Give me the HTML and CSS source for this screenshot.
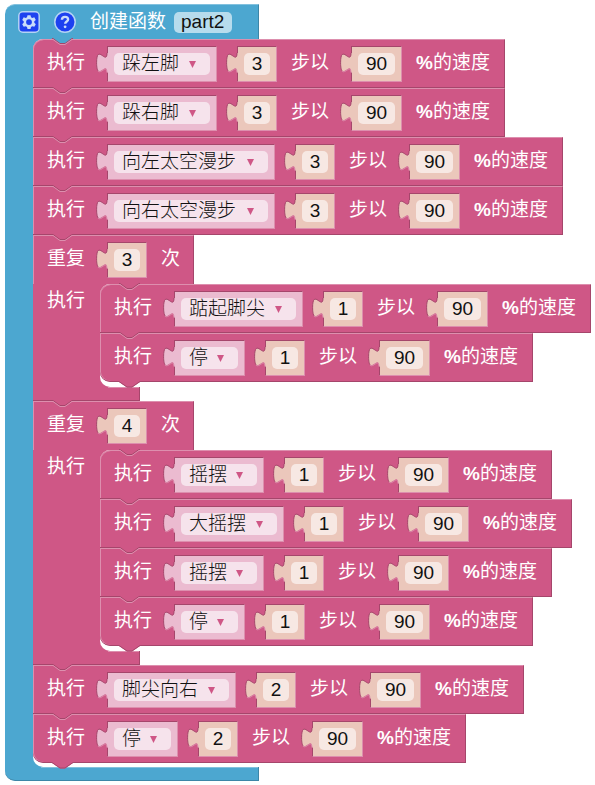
FILE: index.html
```html
<!DOCTYPE html>
<html lang="zh-CN">
<head>
<meta charset="utf-8">
<meta name="viewport" content="width=device-width, initial-scale=1">
<title>part2</title>
<link rel="stylesheet" href="styles.css">
</head>
<body>
<svg class="defs" aria-hidden="true">
  <symbol id="notch" viewBox="0 0 21 8">
    <path class="notch-fill" d="M0 0H21L20 1L14 6H8L1 1z"/>
    <path class="notch-dark" d="M0 .5H1L8 5.5H13L20 .5H21"/>
    <path class="notch-light" d="M0 1.5H1L8 6.5H13L20 1.5H21"/>
  </symbol>
  <symbol id="tail" viewBox="0 0 21 8">
    <path class="tail-fill" d="M0 0H21V1L13 6.5H8L0 1z"/>
    <path class="notch-dark" d="M0 .5L8 6H13L21 .5"/>
  </symbol>
  <symbol id="plug" viewBox="0 0 12 22">
    <path class="plug-fill" d="M12 1H11C11 14 .6 -9.4 .6 10.75C.6 30.9 11 7.5 11 20.5H12z"/>
    <path class="plug-dark" d="M11 1C11 14 .6 -9.4 .6 10.75C.6 15.500 1.300 18 2.200 19"/>
    <path class="plug-light" d="M2.200 19.300C5.500 22 10.500 12 11 20.500"/>
  </symbol>
</svg>
<main class="workspace">
  <section class="fn">
    <header class="fn-head">
      <button class="icon" aria-label="设置">
        <svg viewBox="0 0 22 22"><rect class="icon-bg" x=".8" y=".8" width="20.400" height="20.400" rx="4"/><path class="gear" fill-rule="evenodd" d="M9.500 4.200h3l.5 2 1.300.7 2-.6 1.500 2.600-1.500 1.400v1.500l1.500 1.400-1.500 2.600-2-.6-1.300.7-.5 2h-3l-.5-2-1.300-.7-2 .6-1.500-2.600 1.500-1.400v-1.500L4.200 8.900l1.500-2.600 2 .6L9 6.200zM11 8.200a2.900 2.900 0 1 0 0 5.800a2.900 2.900 0 0 0 0-5.800z"/></svg>
      </button>
      <button class="icon" aria-label="帮助">
        <svg viewBox="0 0 22 22"><circle class="icon-bg" cx="11" cy="11" r="10.200"/><path class="mark" d="M7.900 8.700C8 6.800 9.300 5.900 11 5.900s3.100 1 3.100 2.600c0 2-2.900 2.100-2.900 4.300"/><circle class="dot" cx="11.100" cy="15.800" r="1.400"/></svg>
      </button>
      <label for="fn-name">创建函数</label>
      <input id="fn-name" class="name" value="part2">
    </header>
    <div class="fn-body">
      <div class="stack">
        <div class="row first"><svg class="notch"><use href="#notch"/></svg>
          <label class="verb" for="a1">执行</label>
          <span class="slot action c3"><svg class="plug"><use href="#plug"/></svg><select id="a1"><option>跺左脚</option></select></span>
          <span class="slot num"><svg class="plug"><use href="#plug"/></svg><input id="s1" value="3"></span>
          <label class="steps" for="s1">步以</label>
          <span class="slot num wide"><svg class="plug"><use href="#plug"/></svg><input id="p1" value="90"></span>
          <label class="speed" for="p1"><b>%</b>的速度</label>
        </div>
        <div class="row"><svg class="notch"><use href="#notch"/></svg>
          <label class="verb" for="a2">执行</label>
          <span class="slot action c3"><svg class="plug"><use href="#plug"/></svg><select id="a2"><option>跺右脚</option></select></span>
          <span class="slot num"><svg class="plug"><use href="#plug"/></svg><input id="s2" value="3"></span>
          <label class="steps" for="s2">步以</label>
          <span class="slot num wide"><svg class="plug"><use href="#plug"/></svg><input id="p2" value="90"></span>
          <label class="speed" for="p2"><b>%</b>的速度</label>
        </div>
        <div class="row"><svg class="notch"><use href="#notch"/></svg>
          <label class="verb" for="a3">执行</label>
          <span class="slot action c6"><svg class="plug"><use href="#plug"/></svg><select id="a3"><option>向左太空漫步</option></select></span>
          <span class="slot num"><svg class="plug"><use href="#plug"/></svg><input id="s3" value="3"></span>
          <label class="steps" for="s3">步以</label>
          <span class="slot num wide"><svg class="plug"><use href="#plug"/></svg><input id="p3" value="90"></span>
          <label class="speed" for="p3"><b>%</b>的速度</label>
        </div>
        <div class="row"><svg class="notch"><use href="#notch"/></svg>
          <label class="verb" for="a4">执行</label>
          <span class="slot action c6"><svg class="plug"><use href="#plug"/></svg><select id="a4"><option>向右太空漫步</option></select></span>
          <span class="slot num"><svg class="plug"><use href="#plug"/></svg><input id="s4" value="3"></span>
          <label class="steps" for="s4">步以</label>
          <span class="slot num wide"><svg class="plug"><use href="#plug"/></svg><input id="p4" value="90"></span>
          <label class="speed" for="p4"><b>%</b>的速度</label>
        </div>
        <div class="loop">
          <div class="row loop-head"><svg class="notch"><use href="#notch"/></svg>
            <label class="verb" for="r1">重复</label>
            <span class="slot num"><svg class="plug"><use href="#plug"/></svg><input id="r1" value="3"></span>
            <span class="times">次</span>
          </div>
          <div class="loop-body">
            <span class="do">执行</span>
            <div class="stack">
              <div class="row first"><svg class="notch"><use href="#notch"/></svg>
                <label class="verb" for="a5">执行</label>
                <span class="slot action c4"><svg class="plug"><use href="#plug"/></svg><select id="a5"><option>踮起脚尖</option></select></span>
                <span class="slot num"><svg class="plug"><use href="#plug"/></svg><input id="s5" value="1"></span>
                <label class="steps" for="s5">步以</label>
                <span class="slot num wide"><svg class="plug"><use href="#plug"/></svg><input id="p5" value="90"></span>
                <label class="speed" for="p5"><b>%</b>的速度</label>
              </div>
              <div class="row last"><svg class="notch"><use href="#notch"/></svg>
                <label class="verb" for="a6">执行</label>
                <span class="slot action c1"><svg class="plug"><use href="#plug"/></svg><select id="a6"><option>停</option></select></span>
                <span class="slot num"><svg class="plug"><use href="#plug"/></svg><input id="s6" value="1"></span>
                <label class="steps" for="s6">步以</label>
                <span class="slot num wide"><svg class="plug"><use href="#plug"/></svg><input id="p6" value="90"></span>
                <label class="speed" for="p6"><b>%</b>的速度</label>
                <svg class="tail"><use href="#tail"/></svg>
              </div>
            </div>
          </div>
          <div class="loop-foot"></div>
        </div>
        <div class="loop">
          <div class="row loop-head"><svg class="notch"><use href="#notch"/></svg>
            <label class="verb" for="r2">重复</label>
            <span class="slot num"><svg class="plug"><use href="#plug"/></svg><input id="r2" value="4"></span>
            <span class="times">次</span>
          </div>
          <div class="loop-body">
            <span class="do">执行</span>
            <div class="stack">
              <div class="row first"><svg class="notch"><use href="#notch"/></svg>
                <label class="verb" for="a7">执行</label>
                <span class="slot action c2"><svg class="plug"><use href="#plug"/></svg><select id="a7"><option>摇摆</option></select></span>
                <span class="slot num"><svg class="plug"><use href="#plug"/></svg><input id="s7" value="1"></span>
                <label class="steps" for="s7">步以</label>
                <span class="slot num wide"><svg class="plug"><use href="#plug"/></svg><input id="p7" value="90"></span>
                <label class="speed" for="p7"><b>%</b>的速度</label>
              </div>
              <div class="row"><svg class="notch"><use href="#notch"/></svg>
                <label class="verb" for="a8">执行</label>
                <span class="slot action c3"><svg class="plug"><use href="#plug"/></svg><select id="a8"><option>大摇摆</option></select></span>
                <span class="slot num"><svg class="plug"><use href="#plug"/></svg><input id="s8" value="1"></span>
                <label class="steps" for="s8">步以</label>
                <span class="slot num wide"><svg class="plug"><use href="#plug"/></svg><input id="p8" value="90"></span>
                <label class="speed" for="p8"><b>%</b>的速度</label>
              </div>
              <div class="row"><svg class="notch"><use href="#notch"/></svg>
                <label class="verb" for="a9">执行</label>
                <span class="slot action c2"><svg class="plug"><use href="#plug"/></svg><select id="a9"><option>摇摆</option></select></span>
                <span class="slot num"><svg class="plug"><use href="#plug"/></svg><input id="s9" value="1"></span>
                <label class="steps" for="s9">步以</label>
                <span class="slot num wide"><svg class="plug"><use href="#plug"/></svg><input id="p9" value="90"></span>
                <label class="speed" for="p9"><b>%</b>的速度</label>
              </div>
              <div class="row last"><svg class="notch"><use href="#notch"/></svg>
                <label class="verb" for="a10">执行</label>
                <span class="slot action c1"><svg class="plug"><use href="#plug"/></svg><select id="a10"><option>停</option></select></span>
                <span class="slot num"><svg class="plug"><use href="#plug"/></svg><input id="s10" value="1"></span>
                <label class="steps" for="s10">步以</label>
                <span class="slot num wide"><svg class="plug"><use href="#plug"/></svg><input id="p10" value="90"></span>
                <label class="speed" for="p10"><b>%</b>的速度</label>
                <svg class="tail"><use href="#tail"/></svg>
              </div>
            </div>
          </div>
          <div class="loop-foot"></div>
        </div>
        <div class="row"><svg class="notch"><use href="#notch"/></svg>
          <label class="verb" for="a11">执行</label>
          <span class="slot action c4"><svg class="plug"><use href="#plug"/></svg><select id="a11"><option>脚尖向右</option></select></span>
          <span class="slot num"><svg class="plug"><use href="#plug"/></svg><input id="s11" value="2"></span>
          <label class="steps" for="s11">步以</label>
          <span class="slot num wide"><svg class="plug"><use href="#plug"/></svg><input id="p11" value="90"></span>
          <label class="speed" for="p11"><b>%</b>的速度</label>
        </div>
        <div class="row last"><svg class="notch"><use href="#notch"/></svg>
          <label class="verb" for="a12">执行</label>
          <span class="slot action c1"><svg class="plug"><use href="#plug"/></svg><select id="a12"><option>停</option></select></span>
          <span class="slot num"><svg class="plug"><use href="#plug"/></svg><input id="s12" value="2"></span>
          <label class="steps" for="s12">步以</label>
          <span class="slot num wide"><svg class="plug"><use href="#plug"/></svg><input id="p12" value="90"></span>
          <label class="speed" for="p12"><b>%</b>的速度</label>
          <svg class="tail"><use href="#tail"/></svg>
        </div>
      </div>
    </div>
    <div class="fn-foot"></div>
  </section>
</main>
</body>
</html>
```
FILE: styles.css
```css
:root {
  --pink: #cf5786;
  --pink-light: #dd8fae;
  --pink-dark: #a5466b;
  --blue: #4ca7d0;
  --blue-light: #82c1de;
  --blue-dark: #3d86a7;
  --above: var(--pink);
}

* { box-sizing: border-box; }

body {
  margin: 0;
  background: #fff;
  color: #fff;
  font: 400 19px/34px "Liberation Sans", "Noto Sans CJK SC", sans-serif;
}

.defs { position: absolute; width: 0; height: 0; }
.workspace { padding: 4px 0 4px 5px; }

input, select, button {
  appearance: none;
  margin: 0;
  padding: 0;
  border: 0;
  font: inherit;
}

/* Function definition block */
.fn-head {
  display: flex;
  align-items: center;
  width: 254px;
  height: 35px;
  padding-left: 13px;
  background: var(--blue);
  border-top: 1px solid var(--blue-light);
  border-right: 1px solid var(--blue-dark);
  border-top-left-radius: 10px;
}
.icon {
  width: 22px;
  height: 22px;
  margin-right: 14px;
  background: none;
}
.icon svg { display: block; width: 22px; height: 22px; }
.icon-bg { fill: #1d41f0; stroke: #b5d3f4; stroke-width: 1.500; }
.gear, .dot { fill: #c9dcfa; }
.mark { fill: none; stroke: #c9dcfa; stroke-width: 2.400; }
.name {
  width: 58px;
  height: 21px;
  margin-left: 8px;
  padding-left: 7px;
  border-radius: 5px;
  background: #b7dced;
  color: #111;
}
.fn-body {
  padding-left: 28px;
  background: linear-gradient(var(--blue), var(--blue)) 0 0 / 100px 100% no-repeat;
}
.fn-foot {
  width: 254px;
  height: 14px;
  background: linear-gradient(var(--blue-light), var(--blue-light)) 36px 0 / 100% 1px no-repeat var(--blue);
  border: 1px solid var(--blue-dark);
  border-width: 0 1px 1px 0;
  border-bottom-left-radius: 10px;
}

/* Statement stacks */
.stack {
  flex: 1;
  padding-bottom: 4px;
  background: #fff;
  border-radius: 10px 0 0 10px;
}
.row {
  position: relative;
  display: flex;
  align-items: flex-start;
  width: max-content;
  height: 49px;
  padding: 6px 13px 0 14px;
  background: var(--pink);
  border: 1px solid var(--pink-dark);
  border-top-color: var(--pink-light);
  border-left: 0;
  box-shadow: inset 1px 0 var(--pink-light);
}
.row.first { border-top-left-radius: 10px; }
.row.last { border-bottom-left-radius: 10px; }
.fn-body > .stack > .first { --above: var(--blue); }

.notch, .tail {
  position: absolute;
  left: 19px;
  width: 21px;
  height: 8px;
}
.notch { top: -2px; }
.tail { top: 47px; }
.notch-fill { fill: var(--above); }
.tail-fill { fill: var(--pink); }
.notch-dark, .notch-light { fill: none; }
.notch-dark { stroke: var(--pink-dark); }
.notch-light { stroke: var(--pink-light); }

.verb, .steps { width: 40px; margin-right: 20px; white-space: nowrap; }
.steps, .speed, .times { margin-left: 14px; white-space: nowrap; }
.speed { width: 75px; }
.speed b { font-weight: 700; }

/* Value blocks */
.slot {
  position: relative;
  width: 40px;
  height: 36px;
  padding: 6px;
  border: 1px solid var(--pink-light);
  border-top-color: var(--pink-dark);
  border-left-color: var(--pink-dark);
  color: #ebc7bb;
  background: currentColor;
}
.action { margin-right: 20px; color: #ebbbd0; }
.wide { width: 51px; }
.c1 { width: 71px; }
.c2 { width: 90px; }
.c3 { width: 110px; }
.c4 { width: 129px; }
.c6 { width: 168px; }
.slot input, .slot select {
  display: block;
  width: 100%;
  height: 22px;
  border-radius: 5px;
  background: #f7e8e3;
  color: #111;
  line-height: 22px;
}
.slot input { text-align: center; }
.slot select { padding-left: 8px; background: #f6e3ec; font-weight: 300; }
.action::after {
  content: "";
  position: absolute;
  top: 14px;
  right: 20px;
  width: 7px;
  height: 7px;
  background: var(--pink);
  clip-path: polygon(0 0, 100% 0, 50% 100%);
}
.plug {
  position: absolute;
  left: -12px;
  top: 5px;
  width: 12px;
  height: 22px;
}
.plug-fill { fill: currentColor; }
.plug-dark, .plug-light { fill: none; }
.plug-dark { stroke: var(--pink-dark); }
.plug-light { stroke: var(--pink-light); }

/* Repeat block */
.loop-head { width: 161px; border-bottom: 0; }
.loop-body {
  display: flex;
  background: linear-gradient(var(--pink), var(--pink)) 0 0 / 100px 100% no-repeat;
}
.do { width: 67px; padding-left: 14px; }
.loop-body .stack { padding-bottom: 5px; }
.loop-foot {
  width: 107px;
  height: 14px;
  background: linear-gradient(var(--pink-light), var(--pink-light)) 75px 0 / 100% 1px no-repeat var(--pink);
  border: 1px solid var(--pink-dark);
  border-width: 0 1px 1px 0;
}
```
